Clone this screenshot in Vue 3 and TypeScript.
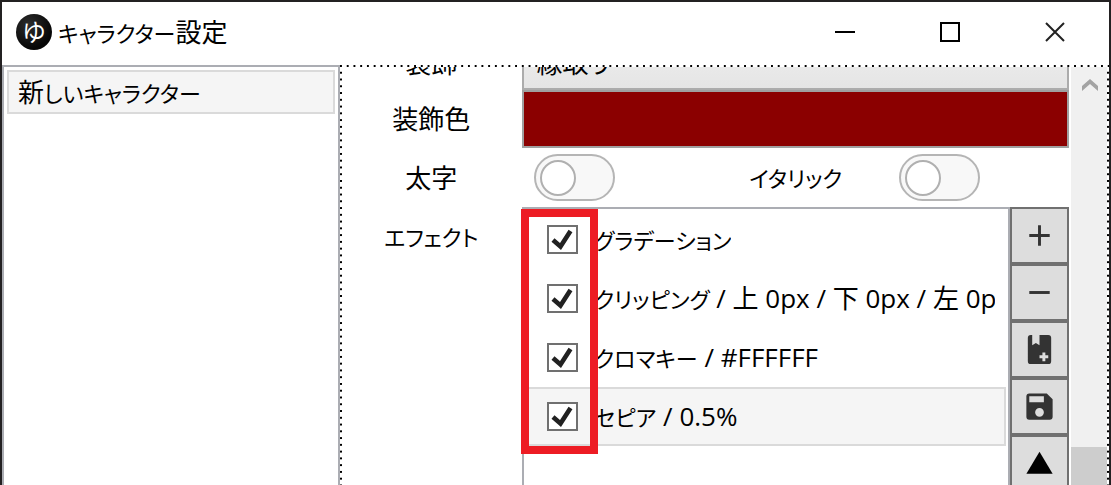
<script setup lang="ts">
import { ref } from 'vue'

interface Effect {
  id: number
  name: string
  detail: string
  enabled: boolean
}

const decoration = ref('縁取り')
const decorationColor = ref('#8b0000')
const bold = ref(false)
const italic = ref(false)
const selectedEffect = ref(4)
const effects = ref<Effect[]>([
  { id: 1, name: 'グラデーション', detail: '', enabled: true },
  { id: 2, name: 'クリッピング', detail: ' / 上 0px / 下 0px / 左 0px / 右 0px', enabled: true },
  { id: 3, name: 'クロマキー', detail: ' / #FFFFFF', enabled: true },
  { id: 4, name: 'セピア', detail: ' / 0.5%', enabled: true },
])

const tools = [
  { name: '追加', path: 'M19 13h-6v6h-2v-6H5v-2h6V5h2v6h6z' },
  { name: '削除', path: 'M5 11h14v2H5z' },
  {
    name: 'テンプレートに追加',
    path: 'M6 2h1v7l2.5-1.5L12 9V2h6a2 2 0 0 1 2 2v16a2 2 0 0 1-2 2H6a2 2 0 0 1-2-2V4a2 2 0 0 1 2-2zM14 14v2h-2v2h2v2h2v-2h2v-2h-2v-2z',
  },
  {
    name: '保存',
    path: 'M15 9H5V5h10M12 19a3 3 0 1 1 0-6 3 3 0 0 1 0 6M17 3H5a2 2 0 0 0-2 2v14a2 2 0 0 0 2 2h14a2 2 0 0 0 2-2V7z',
  },
  { name: '上へ', path: 'M12 4l9 15H3z' },
]
</script>

<template>
  <div class="window">
    <header class="titlebar">
      <span class="logo" aria-hidden="true">ゆ</span>
      <h1 class="title"><span class="kana">キャラクター</span>設定</h1>
      <div class="window-buttons">
        <button type="button" aria-label="最小化">
          <svg viewBox="0 0 20 20"><path d="M0 10h20" /></svg>
        </button>
        <button type="button" aria-label="最大化">
          <svg viewBox="0 0 20 20"><path d="M1 1h18v18H1z" /></svg>
        </button>
        <button type="button" aria-label="閉じる">
          <svg viewBox="0 0 20 20"><path class="thin" d="M1 1l18 18M19 1L1 19" /></svg>
        </button>
      </div>
    </header>

    <div class="body">
      <ul class="characters">
        <li>
          <button type="button" class="character">新<span class="kana">しいキャラクター</span></button>
        </li>
      </ul>

      <main class="pane">
        <form class="form" @submit.prevent>
          <div class="row first">
            <label class="label" for="decoration">装飾</label>
            <select id="decoration" v-model="decoration" class="select wide">
              <option>縁取り</option>
            </select>
          </div>
          <div class="row">
            <label class="label" for="color">装飾色</label>
            <input id="color" v-model="decorationColor" class="color wide" type="color" />
          </div>
          <div class="row toggles">
            <label class="label" for="bold">太字</label>
            <input id="bold" v-model="bold" class="toggle" type="checkbox" role="switch" />
            <label class="label" for="italic"><span class="kana">イタリック</span></label>
            <input id="italic" v-model="italic" class="toggle" type="checkbox" role="switch" />
          </div>
          <div class="row effects-row">
            <span id="effects-label" class="label"><span class="kana">エフェクト</span></span>
            <div class="effects wide">
              <ul class="effect-list" aria-labelledby="effects-label">
                <li
                  v-for="effect in effects"
                  :key="effect.id"
                  class="effect"
                  :class="{ selected: effect.id === selectedEffect }"
                  @click="selectedEffect = effect.id"
                >
                  <span class="tick">
                    <input :id="`effect-${effect.id}`" v-model="effect.enabled" type="checkbox" />
                    <svg v-if="effect.enabled" viewBox="0 0 22 22" aria-hidden="true">
                      <path d="M2 12l7.5 6.5L19.5 3" />
                    </svg>
                  </span>
                  <label :for="`effect-${effect.id}`"><span class="kana">{{ effect.name }}</span>{{ effect.detail }}</label>
                </li>
              </ul>
              <div class="tools">
                <button v-for="tool in tools" :key="tool.name" type="button" :aria-label="tool.name">
                  <svg viewBox="0 0 24 24"><path fill-rule="evenodd" :d="tool.path" /></svg>
                </button>
              </div>
              <div class="highlight" aria-hidden="true"></div>
            </div>
          </div>
        </form>
        <div class="scrollbar" aria-hidden="true">
          <svg class="scroll-up" viewBox="0 0 16 12"><path d="M0 7l8-7 8 7v5L8 5l-8 7z" /></svg>
          <div class="thumb"></div>
        </div>
        <div class="focus" aria-hidden="true"></div>
      </main>
    </div>
  </div>
</template>

<style>
body {
  margin: 0;
  background: #fff;
}
</style>

<style scoped>
* {
  box-sizing: border-box;
}

.window {
  display: flex;
  flex-direction: column;
  height: 100vh;
  overflow: hidden;
  border: 2px solid #232122;
  border-bottom: 0;
  background: #fff;
  color: #000;
  font-family: 'Open Sans', 'Noto Sans CJK JP', sans-serif;
  font-size: 26px;
  line-height: 40px;
  font-feature-settings: 'palt';
}

/* Katakana and hiragana are set smaller than kanji and Latin */
.kana {
  font-size: 22px;
}

button,
input,
select {
  margin: 0;
  padding: 0;
  border-radius: 0;
  color: inherit;
  font: inherit;
  font-feature-settings: inherit;
}

ul {
  margin: 0;
  padding: 0;
  list-style: none;
}

.titlebar {
  display: flex;
  flex: none;
  align-items: center;
  height: 63px;
  padding: 0 2px 3px 14px;
}

.logo {
  display: flex;
  align-items: center;
  justify-content: center;
  width: 36px;
  height: 36px;
  border-radius: 50%;
  background: radial-gradient(circle at 35% 30%, #2c2c2c, #060606 70%);
  color: #fff;
  font-size: 24px;
  line-height: 36px;
}

.title {
  margin: 0 0 0 6px;
  font-size: 26px;
  font-weight: 400;
}

.window-buttons {
  display: flex;
  align-self: stretch;
  margin-left: auto;
}

.window-buttons button {
  display: flex;
  align-items: center;
  justify-content: center;
  width: 105px;
  border: 0;
  background: none;
}

.window-buttons svg {
  width: 20px;
  height: 20px;
}

.window-buttons path {
  fill: none;
  stroke: #000;
  stroke-width: 2;
}

.window-buttons .thin {
  stroke: #222;
}

.body {
  display: grid;
  flex: 1;
  grid-template-columns: 44fr 100fr;
  min-height: 0;
}

.characters {
  padding: 3px;
  border: 2px solid #abadb3;
  border-bottom: 0;
}

.character {
  width: 100%;
  height: 44px;
  padding-left: 9px;
  border: 2px solid #dadada;
  background: #f5f5f5;
  line-height: 40px;
  text-align: left;
}

.pane {
  position: relative;
  display: flex;
  min-width: 0;
  overflow: hidden;
}

.form {
  flex: 1;
  min-width: 0;
}

.row {
  display: grid;
  grid-template-columns: repeat(4, 1fr);
  align-items: center;
  height: 58px;
}

.row.first {
  margin-top: -33px;
}

.row.first .label {
  padding-top: 4px;
}

.row.toggles {
  height: 59px;
}

.wide {
  grid-column: 2 / -1;
}

.label {
  text-align: center;
}

.select {
  width: 100%;
  height: 58px;
  padding: 4px 0 0 12px;
  border: 2px solid #acacac;
  background: linear-gradient(#f0f0f0, #e5e5e5);
  appearance: none;
}

.color {
  display: block;
  width: 100%;
  height: 58px;
  border: 2px solid #a0a0a0;
  background: #8b0000;
  appearance: none;
}

.color::-webkit-color-swatch-wrapper {
  padding: 0;
}

.color::-webkit-color-swatch {
  border: 0;
  border-radius: 0;
}

.toggle {
  display: flex;
  align-items: center;
  width: 81px;
  height: 47px;
  margin-left: 12px;
  padding-left: 4px;
  border: 2px solid #b5b5b5;
  border-radius: 24px;
  background: #f8f8f8;
  appearance: none;
}

.toggle::before {
  width: 36px;
  height: 36px;
  box-sizing: border-box;
  border: 2px solid #b0b0b0;
  border-radius: 50%;
  background: #fff;
  content: '';
}

.toggle:checked {
  justify-content: flex-end;
  padding-right: 4px;
}

.row.effects-row {
  align-items: start;
  height: auto;
}

.effects-row > .label {
  padding-top: 9px;
}

.effects {
  position: relative;
  display: flex;
  min-width: 0;
}

.effect-list {
  flex: 1;
  min-width: 0;
  padding: 1px 2px 0;
  border: 2px solid #abadb3;
}

.effect {
  display: flex;
  align-items: center;
  gap: 16px;
  height: 59px;
  padding: 0 9px 0 19px;
  border: 2px solid transparent;
}

.effect.selected {
  border-color: #dadada;
  background: #f5f5f5;
}

.effect label {
  overflow: hidden;
  white-space: pre;
}

.tick {
  position: relative;
  flex: none;
  width: 31px;
  height: 29px;
}

.tick input {
  display: block;
  width: 31px;
  height: 29px;
  border: 2px solid #707070;
  background: #fff;
  appearance: none;
}

.tick svg {
  position: absolute;
  top: 3px;
  left: 4px;
  width: 22px;
  height: 22px;
  pointer-events: none;
}

.tick path {
  fill: none;
  stroke: #212121;
  stroke-width: 4.6;
}

.tools {
  display: flex;
  flex: none;
  flex-direction: column;
}

.tools button {
  display: flex;
  align-items: center;
  justify-content: center;
  width: 59px;
  height: 57px;
  border: 2px solid #707070;
  background: #ddd;
}

.tools svg {
  width: 35px;
  height: 35px;
  fill: #333;
}

.tools button:last-child svg {
  fill: #000;
}

.highlight {
  position: absolute;
  top: 2px;
  left: -1px;
  width: 77px;
  height: 245px;
  border: 8px solid #ed1c24;
  pointer-events: none;
}

.scrollbar {
  display: flex;
  flex: none;
  flex-direction: column;
  align-items: center;
  width: 38px;
  margin-left: 2px;
  background: #f0f0f0;
}

.scroll-up {
  flex: none;
  width: 16px;
  height: 12px;
  margin-top: 14px;
  fill: #a3a3a3;
}

.thumb {
  width: 100%;
  height: 9%;
  margin-top: auto;
  background: #cdcdcd;
}

/* Dotted keyboard-focus rectangle drawn above the scrolled form */
.focus {
  position: absolute;
  inset: 0;
  background:
    linear-gradient(90deg, #000 2px, #fff 2px) 0 0 / calc(100% / 114) 2px repeat-x,
    linear-gradient(#000 2px, #fff 2px) 0 0 / 2px calc(100% / 62) repeat-y,
    linear-gradient(#000 2px, #fff 2px) 100% 0 / 2px calc(100% / 62) repeat-y;
  pointer-events: none;
}
</style>
